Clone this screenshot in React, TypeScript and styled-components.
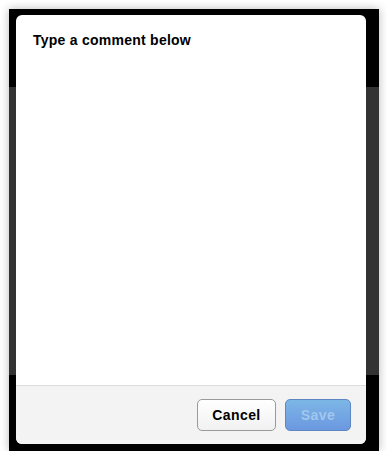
import React from "react";
import styled, { createGlobalStyle } from "styled-components";

const Global = createGlobalStyle`
  html, body { margin: 0; padding: 0; background: #ffffff; }
  body { font-family: "Liberation Sans", Arial, sans-serif; }
`;

const Page = styled.div`
  padding: 9px 0 0 9px;
`;

const Frame = styled.div`
  width: 370px;
  height: 442px;
  box-sizing: border-box;
  padding: 6px 13px 7px 7px;
  display: flex;
  background: linear-gradient(
    to bottom,
    #000 0px,
    #000 78px,
    #333 78px,
    #333 366px,
    #000 366px,
    #000 100%
  );
  box-shadow: 0 0 9px rgba(0, 0, 0, 0.28);
`;

const Dialog = styled.div`
  flex: 1;
  display: flex;
  flex-direction: column;
  background: #fff;
  border-radius: 6px;
  overflow: hidden;
`;

const Body = styled.div`
  flex: 1;
  padding: 17px 17px;
`;

const Title = styled.h2`
  margin: 0;
  font-size: 14px;
  line-height: 16px;
  font-weight: bold;
  letter-spacing: 0.25px;
  color: #000;
`;

const Footer = styled.div`
  display: flex;
  justify-content: flex-end;
  gap: 9px;
  padding: 13px 15px 13px;
  background: #f3f3f3;
  border-top: 1px solid #dcdcdc;
`;

const Button = styled.button<{ $primary?: boolean }>`
  height: 32px;
  width: ${(p) => (p.$primary ? "66px" : "79px")};
  box-sizing: border-box;
  border-radius: 5px;
  font-family: "Liberation Sans", Arial, sans-serif;
  font-size: 14px;
  font-weight: bold;
  letter-spacing: 0.4px;
  padding: 0;
  border: 1px solid ${(p) => (p.$primary ? "#5e86c2" : "#9a9a9a")};
  color: ${(p) => (p.$primary ? "#a3c6ee" : "#000")};
  background: ${(p) =>
    p.$primary
      ? "linear-gradient(to bottom, #7cb6e6, #6b98e0)"
      : "linear-gradient(to bottom, #ffffff, #f1f1f1)"};
`;

export default function App() {
  return (
    <>
      <Global />
      <Page>
        <Frame>
          <Dialog>
            <Body>
              <Title>Type a comment below</Title>
            </Body>
            <Footer>
              <Button>Cancel</Button>
              <Button $primary disabled>
                Save
              </Button>
            </Footer>
          </Dialog>
        </Frame>
      </Page>
    </>
  );
}
